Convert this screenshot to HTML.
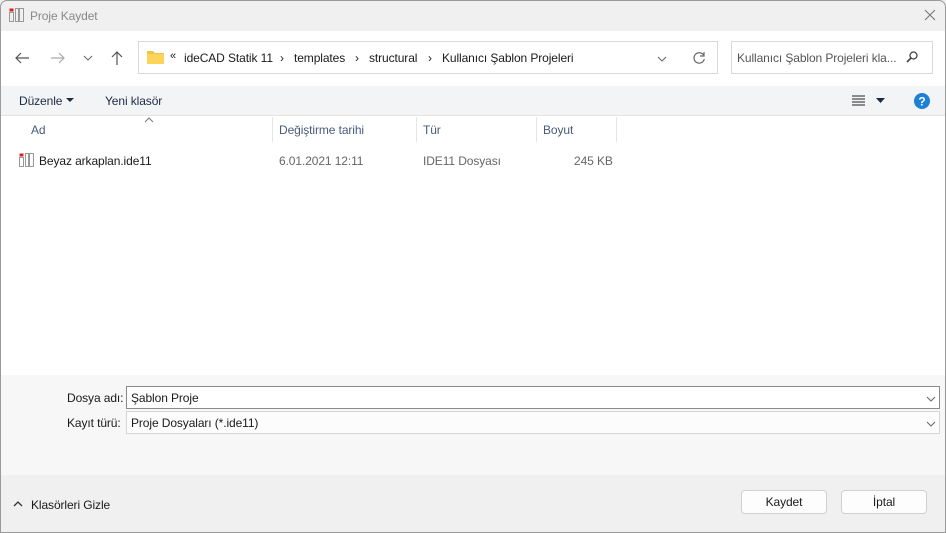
<!DOCTYPE html>
<html><head><meta charset="utf-8"><style>
*{box-sizing:border-box;margin:0;padding:0}
body{width:946px;height:533px;overflow:hidden;font-family:"Liberation Sans",sans-serif;font-size:12px;color:#1a1a1a;background:#fff;position:relative;letter-spacing:-0.1px}
.a{position:absolute}
</style></head><body>
<div class="a" style="left:0;top:0;width:946px;height:31px;background:#f0f0f0"></div>
<svg class="a" style="left:9px;top:8px" width="16" height="15"><rect x="0.5" y="0.5" width="4" height="3" fill="#e02020"/><rect x="0.5" y="4.5" width="4" height="9" fill="none" stroke="#999"/><rect x="6.5" y="0.5" width="3" height="13" fill="none" stroke="#999"/><rect x="10.5" y="0.5" width="4" height="13" fill="none" stroke="#999"/></svg>
<div class="a" style="left:30px;top:9px;color:#888;font-size:12px">Proje Kaydet</div>
<svg class="a" style="left:924px;top:9px" width="12" height="12"><path d="M1 1L11 11M11 1L1 11" stroke="#777" stroke-width="1.1"/></svg>

<svg class="a" style="left:14px;top:51px" width="16" height="14"><path d="M15 7H2M7 2L2 7l5 5" stroke="#555" stroke-width="1.2" fill="none"/></svg>
<svg class="a" style="left:50px;top:51px" width="16" height="14"><path d="M1 7h13M9 2l5 5-5 5" stroke="#aaa" stroke-width="1.2" fill="none"/></svg>
<svg class="a" style="left:83px;top:55px" width="10" height="6"><path d="M1 1l4 4 4-4" stroke="#666" fill="none"/></svg>
<svg class="a" style="left:110px;top:50px" width="14" height="16"><path d="M7 15V2M2 7l5-5 5 5" stroke="#555" stroke-width="1.2" fill="none"/></svg>

<div class="a" style="left:138px;top:41px;width:580px;height:33px;border:1px solid #d9d9d9"></div>
<svg class="a" style="left:147px;top:50px" width="17" height="14"><path d="M0 1h6l2 2h9v11H0z" fill="#f5c342"/><rect x="0" y="4" width="17" height="10" fill="#fcd45a"/></svg>
<div class="a" style="left:170px;top:50px;font-size:11px">«</div>
<div class="a" style="left:184px;top:51px">ideCAD Statik 11</div>
<div class="a" style="left:280px;top:51px">›</div>
<div class="a" style="left:294px;top:51px">templates</div>
<div class="a" style="left:355px;top:51px">›</div>
<div class="a" style="left:369px;top:51px">structural</div>
<div class="a" style="left:428px;top:51px">›</div>
<div class="a" style="left:442px;top:51px">Kullanıcı Şablon Projeleri</div>
<svg class="a" style="left:657px;top:56px" width="10" height="6"><path d="M1 1l4 4 4-4" stroke="#666" fill="none"/></svg>
<svg class="a" style="left:692px;top:51px" width="14" height="14"><path d="M11.5 4A5.2 5.2 0 1 0 12.3 8" stroke="#666" stroke-width="1.2" fill="none"/><path d="M12 1v4H8" stroke="#666" stroke-width="1.2" fill="none"/></svg>

<div class="a" style="left:731px;top:41px;width:202px;height:33px;border:1px solid #d9d9d9"></div>
<div class="a" style="left:737px;top:51px;color:#555">Kullanıcı Şablon Projeleri kla...</div>
<svg class="a" style="left:906px;top:51px" width="12" height="12"><circle cx="7.5" cy="4.5" r="3.5" stroke="#444" stroke-width="1.3" fill="none"/><path d="M5 7L1 11" stroke="#444" stroke-width="1.6"/></svg>

<div class="a" style="left:0;top:86px;width:946px;height:30px;background:#f3f4f6;border-bottom:1px solid #e3e3e3"></div>
<div class="a" style="left:19px;top:94px;color:#1e2a44">Düzenle</div>
<svg class="a" style="left:66px;top:98px" width="8" height="5"><path d="M0 0h8L4 4z" fill="#1e2a44"/></svg>
<div class="a" style="left:105px;top:94px;color:#1e2a44">Yeni klasör</div>
<svg class="a" style="left:852px;top:95px" width="14" height="11"><path d="M0 1h13M0 4h13M0 7h13M0 10h13" stroke="#222"/></svg>
<svg class="a" style="left:876px;top:98px" width="9" height="5"><path d="M0 0h9L4.5 5z" fill="#1e2a44"/></svg>
<svg class="a" style="left:913px;top:92px" width="18" height="18"><circle cx="9" cy="9" r="8" fill="#1c7fd8"/><text x="9" y="13.5" font-size="12" font-weight="bold" fill="#fff" text-anchor="middle" font-family="Liberation Sans">?</text></svg>

<svg class="a" style="left:144px;top:117px" width="10" height="6"><path d="M1 5l4-4 4 4" stroke="#777" fill="none"/></svg>
<div class="a" style="left:31px;top:123px;color:#4a5a7a">Ad</div>
<div class="a" style="left:272px;top:117px;width:1px;height:25px;background:#e5e5e5"></div>
<div class="a" style="left:279px;top:123px;color:#4a5a7a">Değiştirme tarihi</div>
<div class="a" style="left:416px;top:117px;width:1px;height:25px;background:#e5e5e5"></div>
<div class="a" style="left:423px;top:123px;color:#4a5a7a">Tür</div>
<div class="a" style="left:536px;top:117px;width:1px;height:25px;background:#e5e5e5"></div>
<div class="a" style="left:543px;top:123px;color:#4a5a7a">Boyut</div>
<div class="a" style="left:616px;top:117px;width:1px;height:25px;background:#e5e5e5"></div>

<svg class="a" style="left:19px;top:153px" width="16" height="15"><rect x="0.5" y="0.5" width="4" height="3" fill="#e02020"/><rect x="0.5" y="4.5" width="4" height="9" fill="none" stroke="#999"/><rect x="6.5" y="0.5" width="3" height="13" fill="none" stroke="#999"/><rect x="10.5" y="0.5" width="4" height="13" fill="none" stroke="#999"/></svg>
<div class="a" style="left:39px;top:154px">Beyaz arkaplan.ide11</div>
<div class="a" style="left:279px;top:154px;color:#666">6.01.2021 12:11</div>
<div class="a" style="left:423px;top:154px;color:#666">IDE11 Dosyası</div>
<div class="a" style="left:574px;top:154px;color:#666">245 KB</div>

<div class="a" style="left:0;top:375px;width:946px;height:100px;background:#f7f7f7"></div>
<div class="a" style="left:67px;top:391px">Dosya adı:</div>
<div class="a" style="left:126px;top:386px;width:814px;height:23px;background:#fff;border:1px solid #8a8a8a"></div>
<div class="a" style="left:131px;top:391px">Şablon Proje</div>
<svg class="a" style="left:926px;top:396px" width="10" height="6"><path d="M1 1l4 4 4-4" stroke="#666" fill="none"/></svg>
<div class="a" style="left:67px;top:416px">Kayıt türü:</div>
<div class="a" style="left:126px;top:411px;width:814px;height:23px;background:#fcfcfc;border:1px solid #d5d5d5"></div>
<div class="a" style="left:131px;top:416px">Proje Dosyaları (*.ide11)</div>
<svg class="a" style="left:926px;top:421px" width="10" height="6"><path d="M1 1l4 4 4-4" stroke="#666" fill="none"/></svg>

<div class="a" style="left:0;top:475px;width:946px;height:58px;background:#f0f0f0"></div>
<svg class="a" style="left:13px;top:501px" width="10" height="6"><path d="M1 5l4-4 4 4" stroke="#333" stroke-width="1.3" fill="none"/></svg>
<div class="a" style="left:31px;top:498px">Klasörleri Gizle</div>
<div class="a" style="left:741px;top:490px;width:86px;height:24px;background:#fdfdfd;border:1px solid #d0d0d0;border-radius:4px;text-align:center;line-height:22px">Kaydet</div>
<div class="a" style="left:841px;top:490px;width:86px;height:24px;background:#fdfdfd;border:1px solid #d0d0d0;border-radius:4px;text-align:center;line-height:22px">İptal</div>
<div class="a" style="left:0;top:0;width:946px;height:533px;border:1px solid #9a9a9a;border-radius:7px 7px 0 0;pointer-events:none"></div>
</body></html>
